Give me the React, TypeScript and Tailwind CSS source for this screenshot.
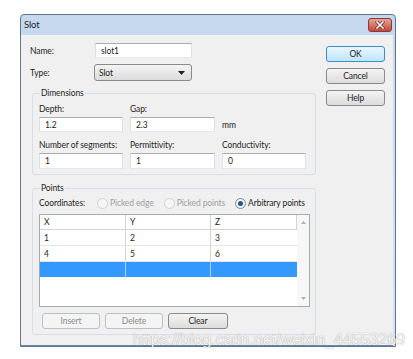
import React from "react";

const inputCls =
  "h-[15px] bg-white border border-[#abadb3] border-b-[#e3e9ef] border-x-[#dbdfe6] pl-[5px] flex items-center text-[#1e1e1e]";

const Radio = ({ checked, label }: { checked?: boolean; label: string }) => (
  <div className="flex items-center">
    <span
      className={
        "w-[11px] h-[11px] rounded-full border flex items-center justify-center " +
        (checked ? "border-[#7a8a99] bg-[#eef3f7]" : "border-[#cfd3d6] bg-[#f6f6f6]")
      }
    >
      {checked && <span className="w-[5px] h-[5px] rounded-full bg-[#1d5a8c]" />}
    </span>
    <span className={"ml-[2px] " + (checked ? "text-[#1e1e1e]" : "text-[#a0a0a0]")}>{label}</span>
  </div>
);

const Button = ({
  label,
  width,
  disabled,
  primary,
}: {
  label: string;
  width: string;
  disabled?: boolean;
  primary?: boolean;
}) => (
  <div
    className={
      "h-[16px] rounded-[3px] border flex items-center justify-center " +
      width +
      " " +
      (disabled
        ? "border-[#bcc0c2] bg-[#f4f4f4] text-[#8c8c8c]"
        : primary
          ? "border-[#3c8fc4] bg-gradient-to-b from-[#eaf6fd] to-[#bee6fd] text-[#1e1e1e]"
          : "border-[#8a8a8a] bg-gradient-to-b from-[#f4f4f4] to-[#dcdcdc] text-[#1e1e1e]")
    }
  >
    {label}
  </div>
);

const rows = [
  ["1", "2", "3"],
  ["4", "5", "6"],
];

export default function App() {
  return (
    <div className="relative w-[413px] h-[359px] bg-white overflow-hidden whitespace-nowrap font-['Lato',sans-serif] text-[8.5px] tracking-[-0.1px] leading-[12px] text-[#1e1e1e]">
      <div className="pt-[14px] pl-[20px]">
        <div className="w-[376px] h-[333px] flex flex-col border border-[#5f7690] rounded-t-[4px] bg-gradient-to-b from-[#c5d8ee] to-[#d6e4f4]">
          {/* title bar */}
          <div className="h-[20px] flex items-center justify-between pl-[3px] pr-[3px]">
            <span className="text-[9.5px] text-[#1e1e1e]">Slot</span>
            <div className="w-[24px] h-[14px] rounded-[3px] border border-[#8a3a32] bg-gradient-to-b from-[#e6a498] to-[#c4463a] flex items-center justify-center">
              <svg width="10" height="8" viewBox="0 0 10 8">
                <path d="M2 1 L8 7 M8 1 L2 7" stroke="#5a2a24" strokeWidth="3" strokeLinecap="square" />
                <path d="M2 1 L8 7 M8 1 L2 7" stroke="#ffffff" strokeWidth="1.6" strokeLinecap="square" />
              </svg>
            </div>
          </div>

          {/* body */}
          <div className="flex-1 flex bg-[#f0f0f0] mr-[2px] border-b border-[#6d87a6]">
            {/* left column */}
            <div className="w-[295px] pl-[9px] pt-[8px] flex flex-col">
              <div className="flex items-center">
                <span className="w-[65px]">Name:</span>
                <div className={inputCls + " w-[97px]"}>slot1</div>
              </div>
              <div className="flex items-center mt-[6px]">
                <span className="w-[64px] mt-[1px]">Type:</span>
                <div className="w-[98px] h-[17px] rounded-[3px] border border-[#8a8a8a] bg-gradient-to-b from-[#f4f4f4] to-[#dcdcdc] flex items-center justify-between pl-[4px] pr-[6px]">
                  <span>Slot</span>
                  <svg width="7" height="4" viewBox="0 0 7 4">
                    <path d="M0 0 L7 0 L3.5 4 Z" fill="#1e1e1e" />
                  </svg>
                </div>
              </div>

              {/* Dimensions */}
              <fieldset className="ml-[2px] mt-[6px] w-[284px] border border-[#d5dfe5] rounded-[3px] pl-[6px] pb-[5px]">
                <legend className="ml-[1px] px-[1px] text-[#1e1e1e]">Dimensions</legend>
                <div className="grid grid-cols-[84px_85px_84px] gap-x-[7px] mt-[4px]">
                  <span>Depth:</span>
                  <span>Gap:</span>
                  <span />
                  <div className={inputCls + " mt-[2px]"}>1.2</div>
                  <div className={inputCls + " mt-[2px]"}>2.3</div>
                  <div className="mt-[2px] flex items-center">mm</div>
                  <span className="mt-[7px]">Number of segments:</span>
                  <span className="mt-[7px]">Permittivity:</span>
                  <span className="mt-[7px]">Conductivity:</span>
                  <div className={inputCls + " mt-[2px] h-[16px]"}>1</div>
                  <div className={inputCls + " mt-[2px] h-[16px]"}>1</div>
                  <div className={inputCls + " mt-[2px] h-[16px]"}>0</div>
                </div>
              </fieldset>

              {/* Points */}
              <fieldset className="ml-[2px] mt-[7px] w-[284px] border border-[#d5dfe5] rounded-[3px] pl-[6px] pb-[5px]">
                <legend className="ml-[1px] px-[1px]">Points</legend>
                <div className="flex items-center mt-[3px]">
                  <span className="w-[58px]">Coordinates:</span>
                  <div className="flex items-center gap-[10px]">
                    <Radio label="Picked edge" />
                    <Radio label="Picked points" />
                    <Radio checked label="Arbitrary points" />
                  </div>
                </div>

                <div className="mt-[5px] w-[271px] h-[93px] border border-[#a5acb5] bg-white flex">
                  <div className="w-[257px] flex flex-col">
                    <div className="grid grid-cols-[86px_85px_86px] h-[15px] border-b border-[#d5d5d5]">
                      {["X", "Y", "Z"].map((h) => (
                        <div key={h} className="pl-[4px] flex items-center border-r border-[#d5d5d5]">
                          {h}
                        </div>
                      ))}
                    </div>
                    {rows.map((r, ri) => (
                      <div key={ri} className="grid grid-cols-[86px_85px_86px] h-[16px] border-b border-[#e4e4e4]">
                        {r.map((c, ci) => (
                          <div key={ci} className={"pl-[4px] flex items-center " + (ci < 2 ? "border-r border-[#d5d5d5]" : "")}>
                            {c}
                          </div>
                        ))}
                      </div>
                    ))}
                    <div className="grid grid-cols-[86px_85px_86px] h-[15px] bg-[#3399ff]">
                      <div className="border-r border-[#a9d2fb]" />
                      <div className="border-r border-[#a9d2fb]" />
                      <div />
                    </div>
                  </div>
                  <div className="flex-1 bg-[#f7f7f7] flex flex-col items-center justify-between pt-[6px] pb-[6px]">
                    <svg width="5" height="3" viewBox="0 0 5 3">
                      <path d="M0 3 L5 3 L2.5 0 Z" fill="#b0b0b0" />
                    </svg>
                    <svg width="5" height="3" viewBox="0 0 5 3">
                      <path d="M0 0 L5 0 L2.5 3 Z" fill="#b0b0b0" />
                    </svg>
                  </div>
                </div>

                <div className="flex mt-[6px] ml-[3px] gap-[5px]">
                  <Button label="Insert" width="w-[58px]" disabled />
                  <Button label="Delete" width="w-[58px]" disabled />
                  <Button label="Clear" width="w-[60px]" />
                </div>
              </fieldset>
            </div>

            {/* right column */}
            <div className="ml-[10px] pt-[11px] flex flex-col gap-[6px]">
              <Button label="OK" width="w-[59px]" primary />
              <Button label="Cancel" width="w-[59px]" />
              <Button label="Help" width="w-[59px]" />
            </div>
          </div>
        </div>
      </div>

      <div className="absolute left-[133px] top-[331px] font-['Liberation_Sans',sans-serif] text-[16px] leading-[18px] tracking-normal text-white/90 [text-shadow:0_0_1px_rgba(0,0,0,0.45)]">
        https://blog.csdn.net/weixin_44553269
      </div>
    </div>
  );
}
